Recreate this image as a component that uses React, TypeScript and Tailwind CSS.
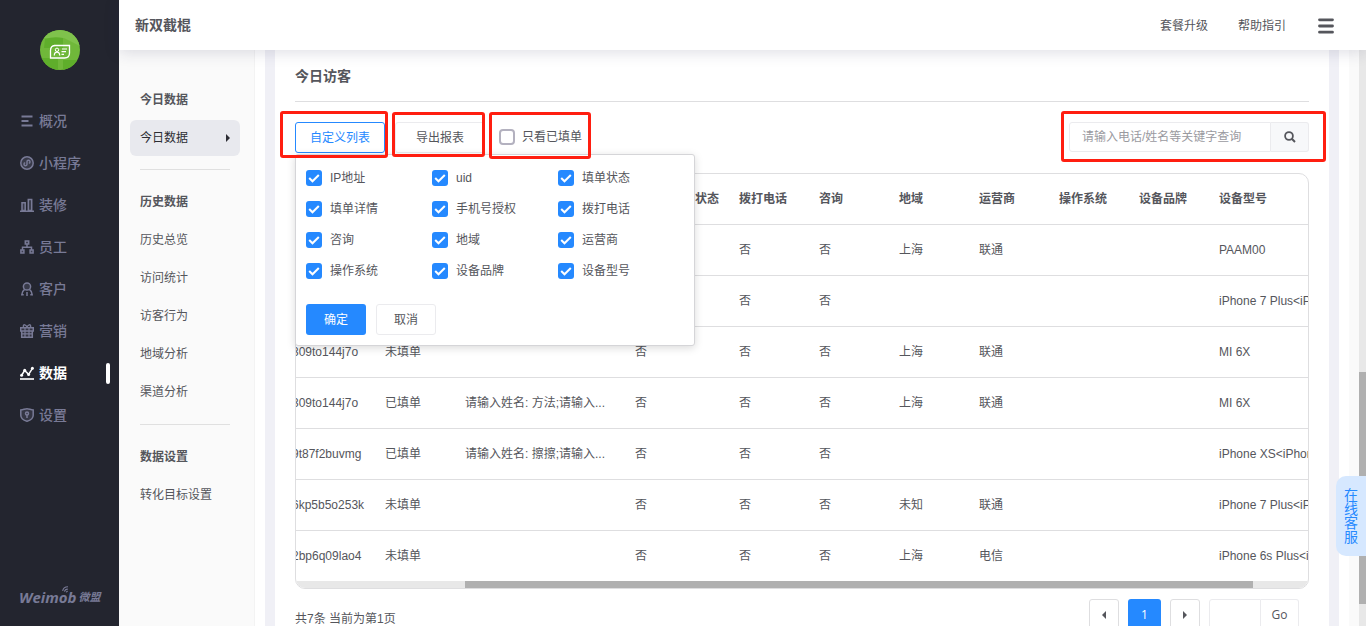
import type { ReactNode } from "react";

const Icon = ({ children }: { children: ReactNode }) => (
  <svg
    width="14"
    height="14"
    viewBox="0 0 14 14"
    fill="none"
    stroke="currentColor"
    strokeWidth="1.5"
    className="shrink-0"
    aria-hidden="true"
  >
    {children}
  </svg>
);

const navItems: { label: string; icon: ReactNode; active?: boolean }[] = [
  {
    label: "概况",
    icon: <path d="M1.500 2.500h11M1.500 7h7M1.500 11.500h11" strokeWidth="2" />,
  },
  {
    label: "小程序",
    icon: (
      <>
        <circle cx="7" cy="7" r="6.200" fill="currentColor" fillOpacity="0.250" />
        <path d="M5.200 6.800a1.500 1.500 0 1 0 1.800 1.500V5.700a1.500 1.500 0 1 1 1.800 1.500" />
      </>
    ),
  },
  {
    label: "装修",
    icon: (
      <path
        d="M0 13.300h14M2 12.500V4.700h3.200v7.800zM8.300 12.500V1.500h3.400v11z"
        fill="currentColor"
        fillOpacity="0.250"
      />
    ),
  },
  {
    label: "员工",
    icon: (
      <>
        <path d="M5.300.9h3.400v3H5.300zM.9 10h3v3H.9zM10.100 10h3v3h-3z" fill="currentColor" fillOpacity="0.300" />
        <path d="M7 4v3M2.500 10V7.300h9V10" />
      </>
    ),
  },
  {
    label: "客户",
    icon: (
      <>
        <circle cx="7" cy="4.500" r="3.600" fill="currentColor" fillOpacity="0.250" />
        <path d="M4.600 7.400C2.900 8.500 2 10.400 1.800 12.800h1.900M9.400 7.400c1.700 1.100 2.600 3 2.800 5.400h-1.900M7 10v4" />
      </>
    ),
  },
  {
    label: "营销",
    icon: (
      <>
        <path d="M.7 3.700h12.600v3.300H.7zM1.700 7v6.200h10.600V7z" fill="currentColor" fillOpacity="0.200" />
        <path d="M5 3.700v9.500M9 3.700v9.500M1.700 9.800h10.600" strokeWidth="1.200" />
        <path
          d="M7 2.800C5.500.3 3.600.3 3.300 1.800c-.1.900.5 1.700 1.200 1.900M7 2.800C8.500.3 10.400.3 10.700 1.800c.1.900-.5 1.700-1.200 1.900"
          strokeWidth="1.300"
        />
      </>
    ),
  },
  {
    label: "数据",
    active: true,
    icon: (
      <>
        <path d="M0 13h14" strokeWidth="1.600" />
        <path d="M1.500 9.500 4.600 4.500l4 3.800L12.500 2.300" />
        <g fill="currentColor" stroke="none">
          <circle cx="1.600" cy="9.300" r="1.500" />
          <circle cx="4.700" cy="4.300" r="1.500" />
          <circle cx="8.600" cy="8.500" r="1.500" />
          <circle cx="12.400" cy="2.300" r="1.500" />
        </g>
      </>
    ),
  },
  {
    label: "设置",
    icon: (
      <>
        <path
          d="M.8 1.900C3 1.900 5 .8 7 .8s4 1.100 6.200 1.100v5.300c0 3-2.700 5-6.200 6.100C3.500 12.200.8 10.200.8 7.200z"
          fill="currentColor"
          fillOpacity="0.200"
        />
        <circle cx="7" cy="5.500" r="1.500" />
        <path d="M7 7v3" />
      </>
    ),
  },
];

const subNav = [
  { title: "今日数据", items: ["今日数据"] },
  {
    title: "历史数据",
    items: ["历史总览", "访问统计", "访客行为", "地域分析", "渠道分析"],
  },
  { title: "数据设置", items: ["转化目标设置"] },
];

const columnOptions = [
  "IP地址",
  "uid",
  "填单状态",
  "填单详情",
  "手机号授权",
  "拨打电话",
  "咨询",
  "地域",
  "运营商",
  "操作系统",
  "设备品牌",
  "设备型号",
];

const headers = [
  "",
  "",
  "",
  "手机号授权状态",
  "拨打电话",
  "咨询",
  "地域",
  "运营商",
  "操作系统",
  "设备品牌",
  "设备型号",
];

const rows = [
  ["", "", "", "否", "否", "否", "上海", "联通", "", "", "PAAM00"],
  ["", "", "", "否", "否", "否", "", "", "", "", "iPhone 7 Plus<iPhone"],
  ["309to144j7o", "未填单", "", "否", "否", "否", "上海", "联通", "", "", "MI 6X"],
  ["309to144j7o", "已填单", "请输入姓名: 方法;请输入...", "否", "否", "否", "上海", "联通", "", "", "MI 6X"],
  ["9t87f2buvmg", "已填单", "请输入姓名: 擦擦;请输入...", "否", "否", "否", "", "", "", "", "iPhone XS<iPhone"],
  ["6kp5b5o253k", "未填单", "", "否", "否", "否", "未知", "联通", "", "", "iPhone 7 Plus<iPhone"],
  ["2bp6q09lao4", "未填单", "", "否", "否", "否", "上海", "电信", "", "", "iPhone 6s Plus<iPhone"],
];

function Sidebar() {
  return (
    <aside className="flex w-[119px] shrink-0 flex-col bg-[#23252f] pt-[30px] text-[#787a96]">
      <svg width="40" height="40" viewBox="0 0 40 40" className="mx-auto shrink-0" role="img" aria-label="头像">
        <defs>
          <clipPath id="avatar">
            <circle cx="20" cy="20" r="20" />
          </clipPath>
        </defs>
        <g clipPath="url(#avatar)">
          <path d="M0 0h40v40H0z" fill="#70b83a" />
          <path d="M0 0h40v16L24 8H0z" fill="#7fc24c" />
          <path d="M5 9q9-3 18-1v10H4zM0 28h18v12H0zM23 30h17v10H23z" fill="#5fae2b" />
        </g>
        <path
          d="M14 15.500h15.500v7.500q0 5-5 5H10.500v-7.500q0-5 5-5z"
          fill="none"
          stroke="#fff"
          strokeWidth="1.300"
        />
        <circle cx="17" cy="19.800" r="1.700" fill="none" stroke="#fff" />
        <path
          d="M14.300 25.500c0-4.500 5.400-4.500 5.400 0M22 19h5M21.500 21.700h4.500M21.500 24.400h2.500"
          fill="none"
          stroke="#fff"
          strokeWidth="1.200"
        />
      </svg>
      <nav className="mt-[30px] flex flex-col">
        {navItems.map((n) => (
          <a
            key={n.label}
            href="#"
            className={
              n.active
                ? "flex h-[42px] items-center gap-[5px] pl-5 pr-[9px] text-sm font-bold text-white"
                : "flex h-[42px] items-center gap-[5px] pl-5 pr-[9px] text-sm font-medium"
            }
          >
            <Icon>{n.icon}</Icon>
            <span>{n.label}</span>
            {n.active && <span className="ml-auto h-[21px] w-1 rounded-sm bg-white" />}
          </a>
        ))}
      </nav>
      <div className="relative mt-auto mb-[19px] flex items-center gap-0.5 pl-[19px] leading-5 font-bold italic">
        <span className="font-['Open_Sans',sans-serif] text-[15px]">Weimob</span>
        <span className="text-[11px]">微盟</span>
        <svg
          width="8"
          height="7"
          viewBox="0 0 8 7"
          fill="none"
          stroke="currentColor"
          strokeWidth="1.100"
          className="absolute top-[-1px] left-[62px]"
          aria-hidden="true"
        >
          <path d="M.7 5C1 2.200 3 .7 6 .7M2.500 5.600c.3-1.600 1.500-2.500 3.300-2.500M4.400 6.300c.1-.6.600-1 1.400-1" />
        </svg>
      </div>
    </aside>
  );
}

function Header() {
  return (
    <header className="relative z-30 flex h-[50px] shrink-0 items-center bg-white pr-8 pl-4 shadow-[0_2px_16px_rgba(40,40,80,0.16)]">
      <h1 className="text-sm font-bold">新双截棍</h1>
      <div className="ml-auto flex items-center pt-0.5">
        <a href="#" className="text-xs">套餐升级</a>
        <a href="#" className="ml-[30px] text-xs">帮助指引</a>
        <button type="button" aria-label="菜单" className="ml-8">
          <svg width="16" height="16" viewBox="0 0 16 16" stroke="#55565c" strokeWidth="2.800" strokeLinecap="round">
            <path d="M1.500 1.800h13M1.500 8h13M1.500 14.200h13" />
          </svg>
        </button>
      </div>
    </header>
  );
}

function SubNav() {
  return (
    <nav className="w-[136px] shrink-0 border-r border-[#f3f3f3] bg-[#fafafa] pt-[31px] pr-3.5 pl-[11px] text-xs">
      {subNav.map((group, g) => (
        <section key={group.title}>
          {g > 0 && <hr className="mx-2.5 my-[13px] border-[#e0e0e0]" />}
          <h2 className="flex h-[38px] items-center px-2.5 font-bold">{group.title}</h2>
          {group.items.map((item) =>
            g === 0 ? (
              <a
                key={item}
                href="#"
                className="my-px flex h-9 items-center justify-between rounded-md bg-[#e8e9ee] px-2.5 text-[#2c2d33]"
              >
                {item}
                <svg width="4" height="8" viewBox="0 0 4 8" fill="currentColor" aria-hidden="true">
                  <path d="M0 0l4 4-4 4z" />
                </svg>
              </a>
            ) : (
              <a key={item} href="#" className="flex h-[38px] items-center px-2.5">
                {item}
              </a>
            ),
          )}
        </section>
      ))}
    </nav>
  );
}

function ColumnPicker() {
  return (
    <form className="absolute top-8 left-0 z-10 w-[400px] rounded-[3px] border border-[#d5d5d8] bg-white px-2.5 pt-2 pb-2.5 shadow-[0_2px_8px_rgba(0,0,0,0.15)]">
      <div className="grid grid-cols-3 gap-y-px">
        {columnOptions.map((c) => (
          <label key={c} className="flex h-[30px] items-center gap-2">
            <span className="relative flex size-4">
              <input type="checkbox" defaultChecked className="size-4 appearance-none rounded-[3px] bg-[#2589ff]" />
              <svg
                width="16"
                height="16"
                viewBox="0 0 16 16"
                fill="none"
                stroke="#fff"
                strokeWidth="2"
                className="pointer-events-none absolute inset-0"
                aria-hidden="true"
              >
                <path d="M3.200 8l3.300 3.300 6.300-6.300" />
              </svg>
            </span>
            {c}
          </label>
        ))}
      </div>
      <div className="mt-[18px] flex gap-2.5">
        <button type="button" className="h-[31px] w-[60px] rounded-[3px] bg-[#2589ff] text-white">
          确定
        </button>
        <button type="button" className="h-[31px] w-[60px] rounded-[3px] border border-[#ebebee] bg-white">
          取消
        </button>
      </div>
    </form>
  );
}

const frame = "pointer-events-none absolute z-20 rounded-[3px] border-3 border-[#ff1e10]";

function Toolbar() {
  return (
    <div className="mt-5 flex h-[31px] items-start">
      <div className="relative">
        <button
          type="button"
          className="block h-[31px] w-[90px] rounded-[3px] border border-[#2589ff] bg-white text-[#2589ff]"
        >
          自定义列表
        </button>
        <ColumnPicker />
        <span className={`${frame} -top-[11px] -right-[3px] -bottom-[5px] -left-[15px]`} />
      </div>
      <div className="relative ml-2.5">
        <button type="button" className="block h-[31px] w-[90px] rounded-[3px] border border-[#ebebee] bg-white">
          导出报表
        </button>
        <span className={`${frame} -top-2.5 right-0 -bottom-1 -left-[3px]`} />
      </div>
      <div className="relative ml-3.5 flex h-[30px] items-center">
        <label className="flex items-center gap-[7px]">
          <input
            type="checkbox"
            className="size-4 appearance-none rounded-[4px] border-2 border-[#b3b1bf] bg-white"
          />
          只看已填单
        </label>
        <span className={`${frame} -top-2.5 -right-[9px] -bottom-[7px] -left-2.5`} />
      </div>
      <div className="relative ml-auto flex h-[30px]">
        <input
          type="text"
          aria-label="关键字查询"
          placeholder="请输入电话/姓名等关键字查询"
          className="w-[202px] rounded-l-[3px] border border-[#ebebee] px-3 outline-none placeholder:text-[#9a9a9f]"
        />
        <button
          type="button"
          aria-label="查询"
          className="flex w-[38px] items-center justify-center rounded-r-[3px] border border-l-0 border-[#ebebee] bg-[#f7f8fa]"
        >
          <svg width="12" height="12" viewBox="0 0 12 12" fill="none" stroke="#55565c" strokeWidth="1.800">
            <circle cx="5" cy="5" r="3.900" />
            <path d="M7.800 7.800l3.200 3.200" strokeWidth="2" />
          </svg>
        </button>
        <span className={`${frame} -top-[11px] -right-[17px] -bottom-2.5 -left-2`} />
      </div>
    </div>
  );
}

function VisitorTable() {
  return (
    <div className="mt-5 overflow-hidden rounded-[10px] border border-[#dedee0]">
      <table className="w-full table-fixed border-collapse text-left whitespace-nowrap">
        <colgroup>
          <col className="w-[79px]" />
          <col className="w-20" />
          <col className="w-[170px]" />
          <col className="w-[104px]" />
          <col className="w-20" />
          <col className="w-20" />
          <col className="w-20" />
          <col className="w-20" />
          <col className="w-20" />
          <col className="w-20" />
          <col />
        </colgroup>
        <thead>
          <tr className="h-[50px] border-b border-[#dedee0]">
            {headers.map((h, i) => (
              <th key={i} scope="col" className="px-2.5 font-bold">
                {h}
              </th>
            ))}
          </tr>
        </thead>
        <tbody>
          {rows.map((row, r) => (
            <tr key={r} className="h-[51px] border-b border-[#dedee0] last:border-b-0">
              {row.map((cell, c) => (
                <td key={c} className={c === 0 ? "p-0" : "px-2.5"}>
                  {c === 0 ? <span className="-ml-1">{cell}</span> : cell}
                </td>
              ))}
            </tr>
          ))}
        </tbody>
      </table>
      <div className="flex h-[7px] bg-[#e8e8e8]">
        <div className="grow-[169]" />
        <div className="grow-[788] bg-[#b0b0b0]" />
        <div className="grow-[55]" />
      </div>
    </div>
  );
}

function Pagination() {
  return (
    <div className="mt-2.5 flex items-start pr-2.5">
      <p className="pt-[11px] leading-[18px]">共7条 当前为第1页</p>
      <div className="ml-auto flex h-[31px] gap-[9px] font-['Open_Sans',sans-serif]">
        <button
          type="button"
          aria-label="上一页"
          className="flex w-[30px] items-center justify-center rounded-[3px] border border-[#dedee0]"
        >
          <svg width="4" height="8" viewBox="0 0 4 8" fill="currentColor">
            <path d="M4 0L0 4l4 4z" />
          </svg>
        </button>
        <button type="button" className="w-[33px] rounded-[3px] bg-[#2589ff] text-white">
          1
        </button>
        <button
          type="button"
          aria-label="下一页"
          className="flex w-[30px] items-center justify-center rounded-[3px] border border-[#dedee0]"
        >
          <svg width="4" height="8" viewBox="0 0 4 8" fill="currentColor">
            <path d="M0 0l4 4-4 4z" />
          </svg>
        </button>
        <div className="flex">
          <input type="text" aria-label="页码" className="w-[52px] rounded-l-[3px] border border-[#ebebee] px-2" />
          <button type="button" className="w-[38px] rounded-r-[3px] border border-l-0 border-[#ebebee]">
            Go
          </button>
        </div>
      </div>
    </div>
  );
}

export default function App() {
  return (
    <div className="flex h-screen overflow-hidden bg-white font-['Liberation_Sans','Noto_Sans_CJK_SC',sans-serif] text-xs text-[#55565c]">
      <Sidebar />
      <div className="flex min-w-0 flex-1 flex-col">
        <Header />
        <div className="relative flex min-h-0 flex-1">
          <SubNav />
          <div className="ml-2.5 min-w-0 flex-1 overflow-hidden border-x-10 border-[#f0f0f6]">
            <main className="px-5 pt-4">
              <h2 className="border-b border-[#dedee0] pb-[15px] text-sm font-bold">今日访客</h2>
              <Toolbar />
              <VisitorTable />
              <Pagination />
            </main>
          </div>
          <div className="ml-2.5 w-2.5 shrink-0 bg-[#fafafa]" />
          <div className="flex w-[7px] shrink-0 flex-col bg-[#e8e8e8]">
            <div className="grow-[322]" />
            <div className="grow-[232] bg-[#b0b0b0]" />
            <div className="grow-[22]" />
          </div>
          <a
            href="#"
            className="absolute right-0 bottom-[70px] z-20 flex h-20 w-[30px] items-center justify-center rounded-l-[10px] bg-[#d6e8ff] text-sm leading-[14px] text-[#2589ff]"
          >
            <span className="w-3.5 break-all">在线客服</span>
          </a>
        </div>
      </div>
    </div>
  );
}
